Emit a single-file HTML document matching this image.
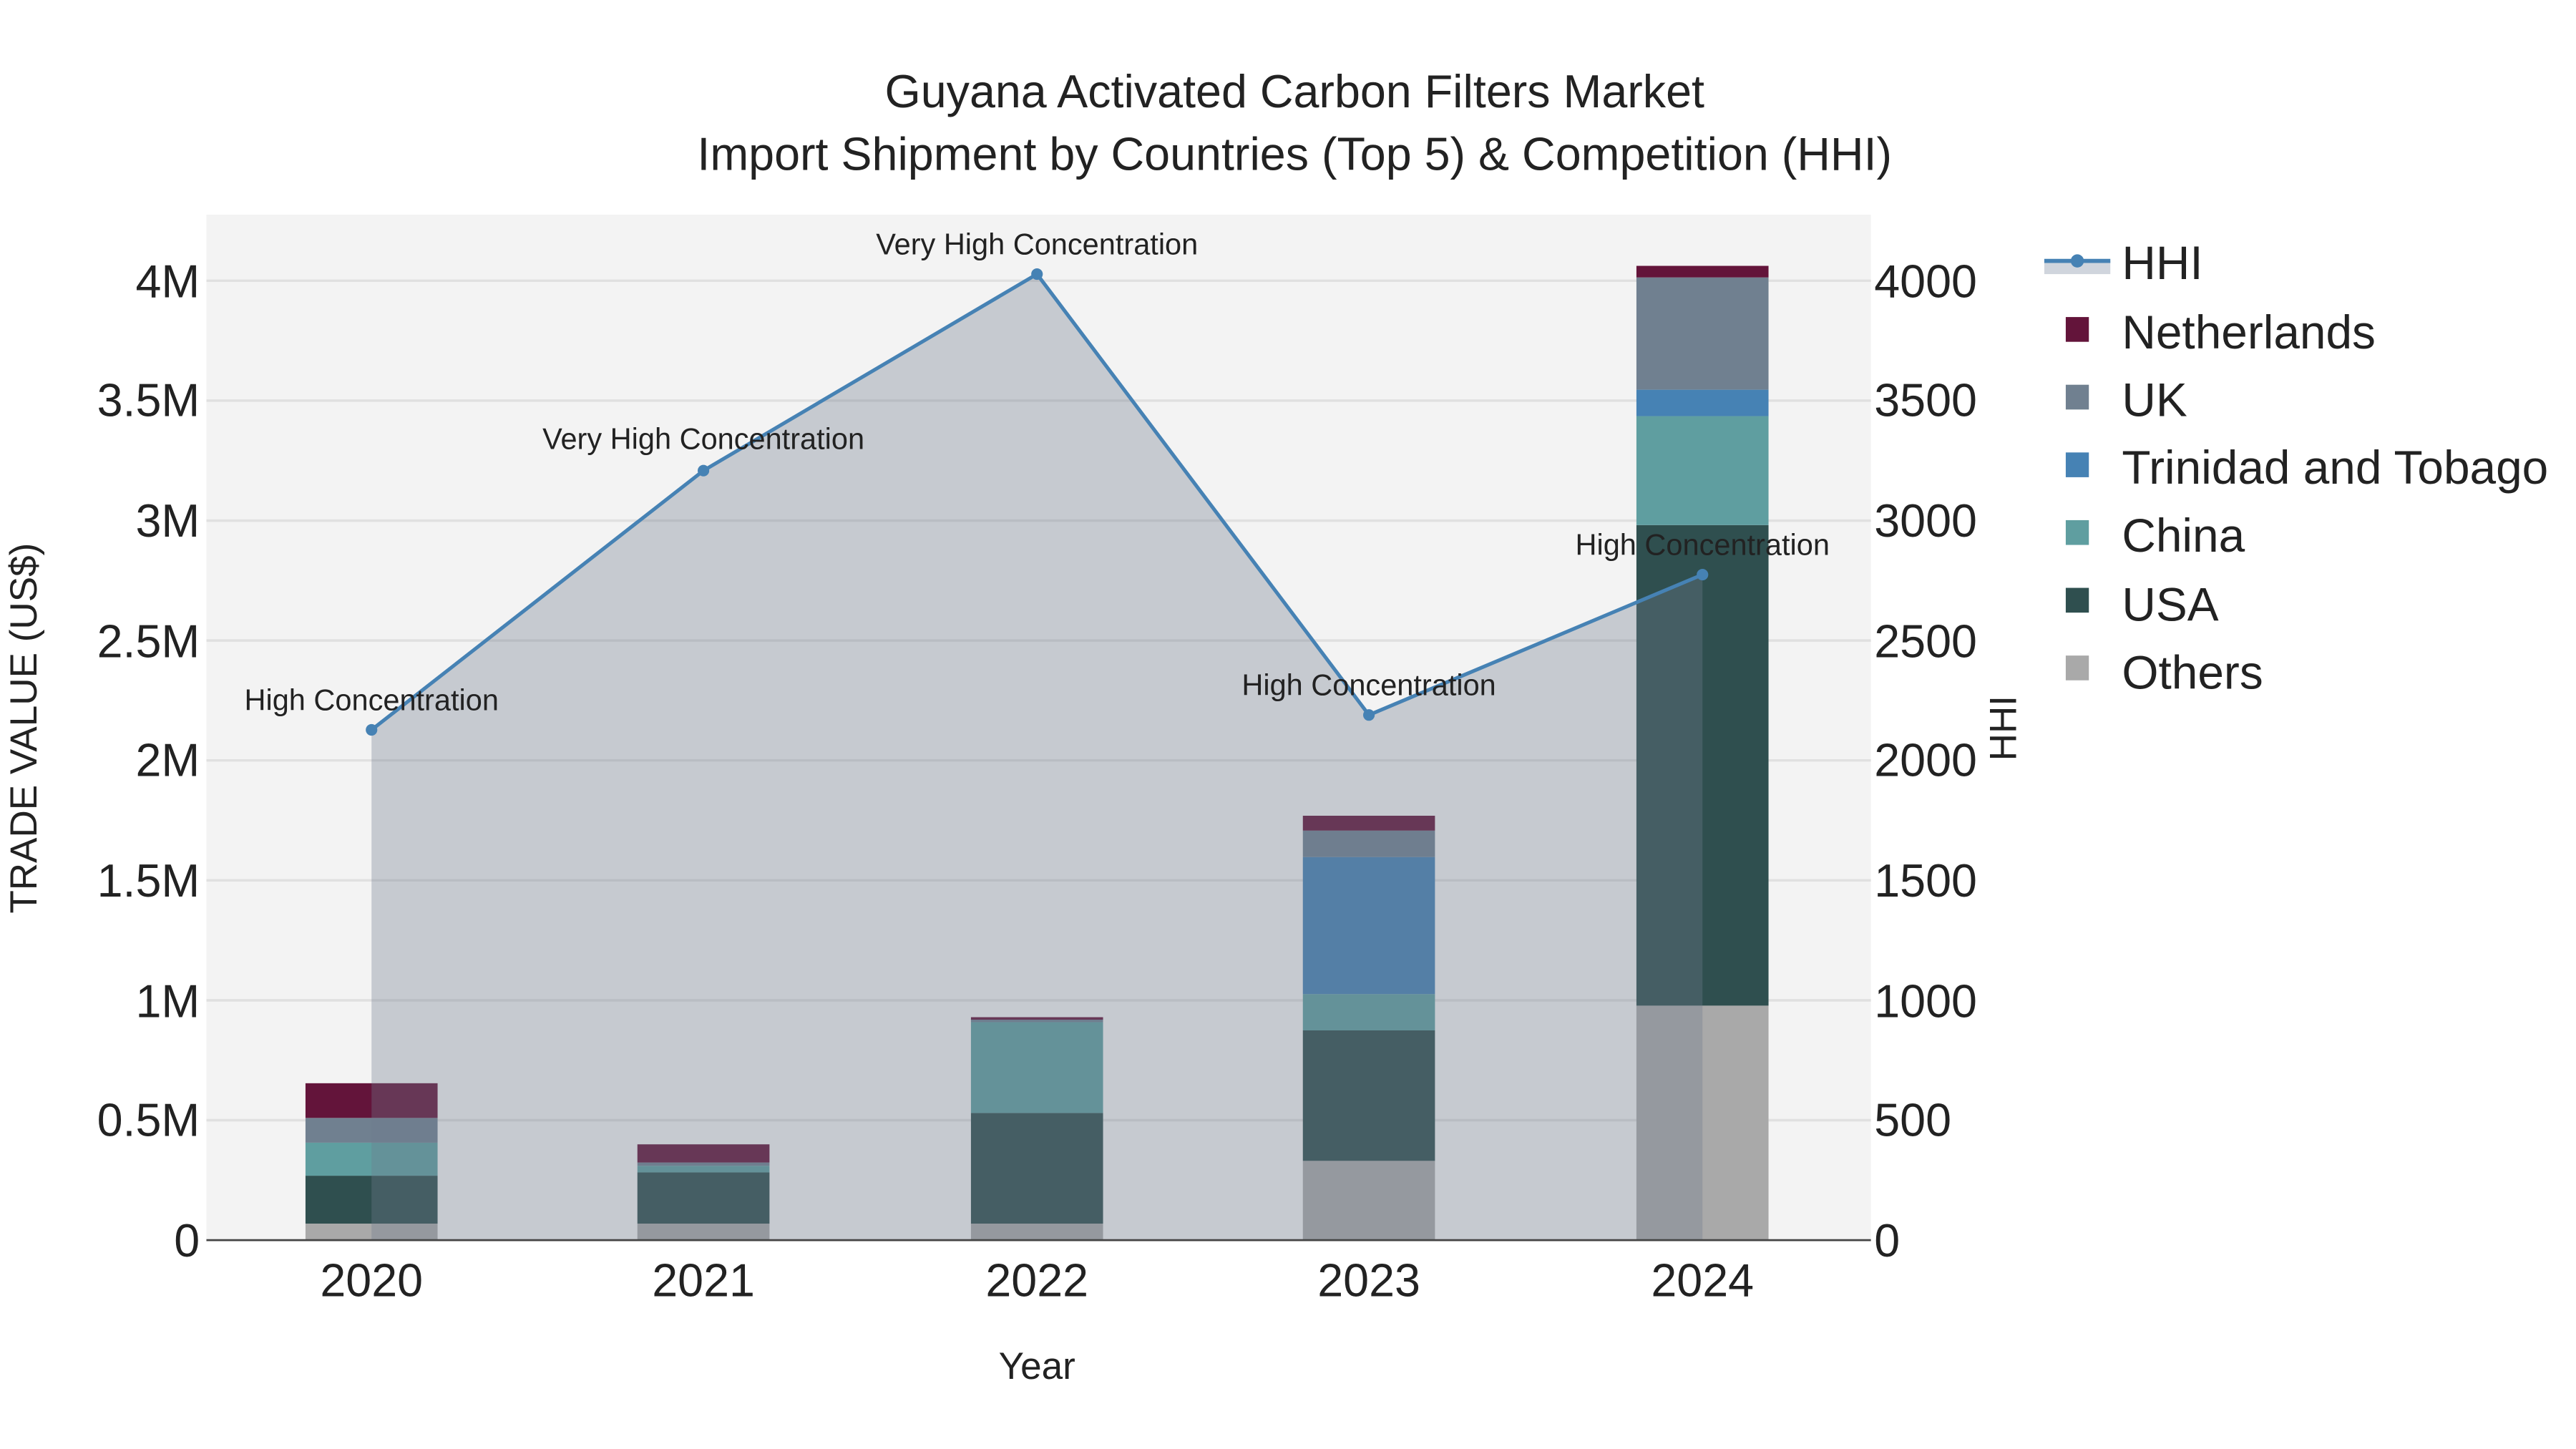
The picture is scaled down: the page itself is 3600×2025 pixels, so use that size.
<!DOCTYPE html>
<html><head><meta charset="utf-8"><style>
html,body{margin:0;padding:0;background:#fff;}
svg{display:block;}
text{font-family:"Liberation Sans",Arial,sans-serif;fill:#222;}
</style></head><body>
<svg width="3600" height="2025" viewBox="0 0 1560 877.5" xmlns="http://www.w3.org/2000/svg">
<rect x="0" y="0" width="1560" height="877.5" fill="#fff"/>
<rect x="125" y="130" width="1008" height="621" fill="#f3f3f3"/>
<g stroke="#e0e0e0" stroke-width="1.5">
<line x1="125" x2="1133" y1="678.4" y2="678.4"/>
<line x1="125" x2="1133" y1="605.8" y2="605.8"/>
<line x1="125" x2="1133" y1="533.1" y2="533.1"/>
<line x1="125" x2="1133" y1="460.5" y2="460.5"/>
<line x1="125" x2="1133" y1="387.9" y2="387.9"/>
<line x1="125" x2="1133" y1="315.3" y2="315.3"/>
<line x1="125" x2="1133" y1="242.6" y2="242.6"/>
<line x1="125" x2="1133" y1="170" y2="170"/>
</g>
<g>
<rect x="185" y="741" width="80" height="10" fill="#a9a9a9"/>
<rect x="185" y="712" width="80" height="29" fill="#2f4f4f"/>
<rect x="185" y="692" width="80" height="20" fill="#5f9ea0"/>
<rect x="185" y="677" width="80" height="15" fill="#708090"/>
<rect x="185" y="656" width="80" height="21" fill="#63143a"/>

<rect x="386" y="741" width="80" height="10" fill="#a9a9a9"/>
<rect x="386" y="710" width="80" height="31" fill="#2f4f4f"/>
<rect x="386" y="706" width="80" height="4" fill="#5f9ea0"/>
<rect x="386" y="704" width="80" height="2" fill="#708090"/>
<rect x="386" y="693" width="80" height="11" fill="#63143a"/>

<rect x="588" y="741" width="80" height="10" fill="#a9a9a9"/>
<rect x="588" y="674" width="80" height="67" fill="#2f4f4f"/>
<rect x="588" y="619" width="80" height="55" fill="#5f9ea0"/>
<rect x="588" y="617" width="80" height="2" fill="#708090"/>
<rect x="588" y="616" width="80" height="1.5" fill="#63143a"/>

<rect x="789" y="703" width="80" height="48" fill="#a9a9a9"/>
<rect x="789" y="624" width="80" height="79" fill="#2f4f4f"/>
<rect x="789" y="602" width="80" height="22" fill="#5f9ea0"/>
<rect x="789" y="519" width="80" height="83" fill="#4682b4"/>
<rect x="789" y="503" width="80" height="16" fill="#708090"/>
<rect x="789" y="494" width="80" height="9" fill="#63143a"/>

<rect x="991" y="609" width="80" height="142" fill="#a9a9a9"/>
<rect x="991" y="318" width="80" height="291" fill="#2f4f4f"/>
<rect x="991" y="252" width="80" height="66" fill="#5f9ea0"/>
<rect x="991" y="236" width="80" height="16" fill="#4682b4"/>
<rect x="991" y="168" width="80" height="68" fill="#708090"/>
<rect x="991" y="161" width="80" height="7" fill="#63143a"/>
</g>
<polygon points="225,442 426,285 628,166 829,433 1031,348 1031,751 225,751" fill="rgba(112,124,142,0.34)"/>
<polyline points="225,442 426,285 628,166 829,433 1031,348" fill="none" stroke="#4682b4" stroke-width="2.2"/>
<g fill="#4682b4">
<circle cx="225" cy="442" r="3.5"/><circle cx="426" cy="285" r="3.5"/><circle cx="628" cy="166" r="3.5"/><circle cx="829" cy="433" r="3.5"/><circle cx="1031" cy="348" r="3.5"/>
</g>
<line x1="125" x2="1133" y1="751" y2="751" stroke="#444" stroke-width="1.2"/>
<g font-size="18" text-anchor="middle">
<text x="225" y="430">High Concentration</text>
<text x="426" y="272">Very High Concentration</text>
<text x="628" y="154">Very High Concentration</text>
<text x="829" y="421">High Concentration</text>
<text x="1031" y="336">High Concentration</text>
</g>
<g font-size="28" text-anchor="end">
<text x="121" y="761">0</text>
<text x="121" y="688">0.5M</text>
<text x="121" y="616">1M</text>
<text x="121" y="543">1.5M</text>
<text x="121" y="470">2M</text>
<text x="121" y="398">2.5M</text>
<text x="121" y="325">3M</text>
<text x="121" y="252">3.5M</text>
<text x="121" y="180">4M</text>
</g>
<g font-size="28" text-anchor="start">
<text x="1135" y="761">0</text>
<text x="1135" y="688">500</text>
<text x="1135" y="616">1000</text>
<text x="1135" y="543">1500</text>
<text x="1135" y="470">2000</text>
<text x="1135" y="398">2500</text>
<text x="1135" y="325">3000</text>
<text x="1135" y="252">3500</text>
<text x="1135" y="180">4000</text>
</g>
<g font-size="28" text-anchor="middle">
<text x="225" y="785">2020</text>
<text x="426" y="785">2021</text>
<text x="628" y="785">2022</text>
<text x="829" y="785">2023</text>
<text x="1031" y="785">2024</text>
</g>
<text x="628" y="835" font-size="23" text-anchor="middle">Year</text>
<text transform="translate(22,441) rotate(-90)" font-size="23" text-anchor="middle">TRADE VALUE (US$)</text>
<text transform="translate(1221,441) rotate(-90)" font-size="23" text-anchor="middle">HHI</text>
<text x="784" y="65" font-size="28" text-anchor="middle">Guyana Activated Carbon Filters Market</text>
<text x="784" y="103" font-size="28" text-anchor="middle">Import Shipment by Countries (Top 5) &amp; Competition (HHI)</text>
<rect x="1238" y="158" width="40" height="8" fill="#d0d5dd"/>
<line x1="1238" x2="1278" y1="158" y2="158" stroke="#4682b4" stroke-width="2.5"/>
<circle cx="1258" cy="158" r="4" fill="#4682b4"/>
<g font-size="28.5">
<text x="1285" y="169">HHI</text>
<text x="1285" y="211">Netherlands</text>
<text x="1285" y="252">UK</text>
<text x="1285" y="293">Trinidad and Tobago</text>
<text x="1285" y="334">China</text>
<text x="1285" y="376">USA</text>
<text x="1285" y="417">Others</text>
</g>
<rect x="1251" y="192" width="14" height="15" fill="#63143a"/>
<rect x="1251" y="233" width="14" height="15" fill="#708090"/>
<rect x="1251" y="274" width="14" height="15" fill="#4682b4"/>
<rect x="1251" y="315" width="14" height="15" fill="#5f9ea0"/>
<rect x="1251" y="356" width="14" height="15" fill="#2f4f4f"/>
<rect x="1251" y="397" width="14" height="15" fill="#a9a9a9"/>
</svg>
</body></html>
